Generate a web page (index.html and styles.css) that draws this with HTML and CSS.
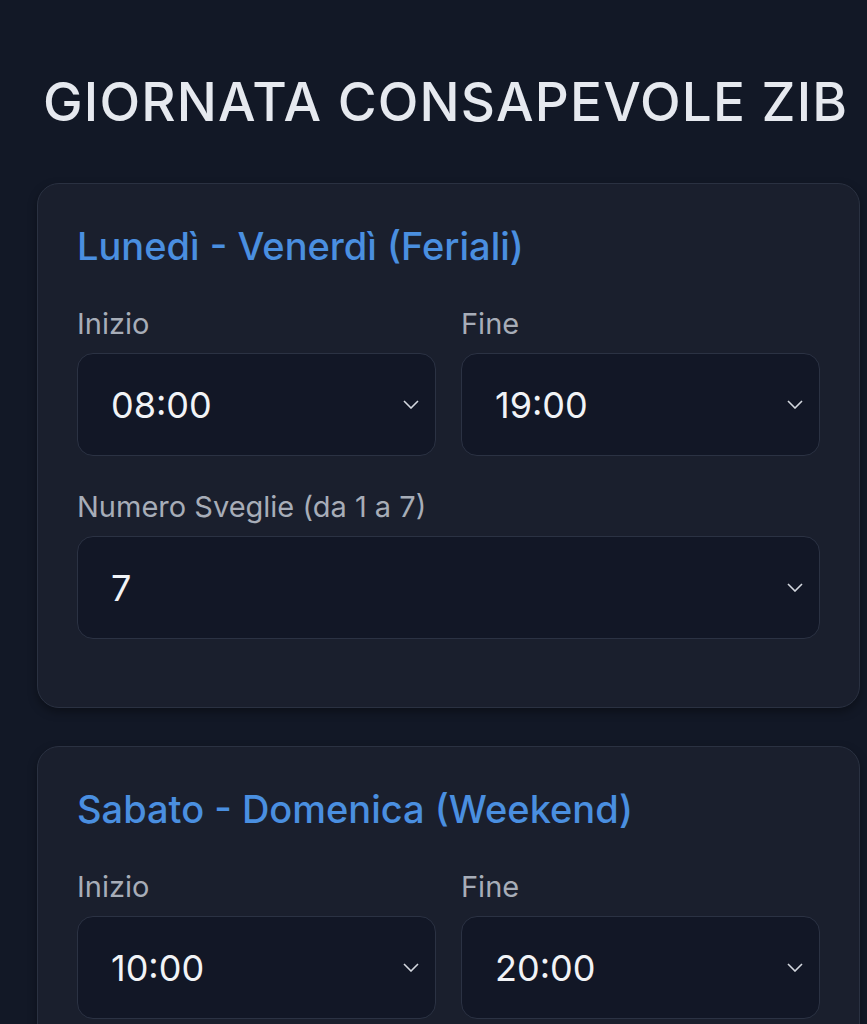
FILE: index.html
```html
<!DOCTYPE html>
<html lang="it">
<head>
    <meta charset="UTF-8">
    <meta name="viewport" content="width=device-width, initial-scale=1.0">
    <title>Giornata Consapevole ZIB</title>
    <link rel="stylesheet" href="styles.css">
</head>
<body>
    <div class="app">
        <h1 class="page-title">GIORNATA CONSAPEVOLE ZIB</h1>

        <div class="card">
            <h2 class="card-title">Lunedì - Venerdì (Feriali)</h2>
            <div class="row">
                <div class="form-group">
                    <label for="wdStart">Inizio</label>
                    <div class="select-wrap">
                        <select id="wdStart">
                            <option>08:00</option>
                        </select>
                        <svg class="chevron" viewBox="0 0 16 9"><path d="M1 1l7 7 7-7"/></svg>
                    </div>
                </div>
                <div class="form-group">
                    <label for="wdEnd">Fine</label>
                    <div class="select-wrap">
                        <select id="wdEnd">
                            <option>19:00</option>
                        </select>
                        <svg class="chevron" viewBox="0 0 16 9"><path d="M1 1l7 7 7-7"/></svg>
                    </div>
                </div>
            </div>
            <div class="form-group">
                <label for="wdAlarms">Numero Sveglie (da 1 a 7)</label>
                <div class="select-wrap">
                    <select id="wdAlarms">
                        <option>7</option>
                    </select>
                    <svg class="chevron" viewBox="0 0 16 9"><path d="M1 1l7 7 7-7"/></svg>
                </div>
            </div>
        </div>

        <div class="card">
            <h2 class="card-title">Sabato - Domenica (Weekend)</h2>
            <div class="row">
                <div class="form-group">
                    <label for="weStart">Inizio</label>
                    <div class="select-wrap">
                        <select id="weStart">
                            <option>10:00</option>
                        </select>
                        <svg class="chevron" viewBox="0 0 16 9"><path d="M1 1l7 7 7-7"/></svg>
                    </div>
                </div>
                <div class="form-group">
                    <label for="weEnd">Fine</label>
                    <div class="select-wrap">
                        <select id="weEnd">
                            <option>20:00</option>
                        </select>
                        <svg class="chevron" viewBox="0 0 16 9"><path d="M1 1l7 7 7-7"/></svg>
                    </div>
                </div>
            </div>
            <div class="form-group">
                <label for="weAlarms">Numero Sveglie (da 1 a 7)</label>
                <div class="select-wrap">
                    <select id="weAlarms">
                        <option>5</option>
                    </select>
                    <svg class="chevron" viewBox="0 0 16 9"><path d="M1 1l7 7 7-7"/></svg>
                </div>
            </div>
        </div>
    </div>
</body>
</html>
```

FILE: styles.css
```css
* {
    margin: 0;
    padding: 0;
    box-sizing: border-box;
    font-family: Inter, "Noto Sans", sans-serif;
}

body {
    background: #121826;
    color: #e5e7eb;
    overflow: hidden;
}

.app {
    padding: 74px 7px 0 37px;
}

.page-title {
    font-size: 53px;
    font-weight: 500;
    letter-spacing: 1.2px;
    color: #e6e9ef;
    line-height: 56px;
    margin-left: 6px;
    margin-bottom: 53px;
}

.card {
    background: #1a1f2d;
    border: 1px solid #2a3141;
    border-radius: 22px;
    box-shadow: 0 4px 10px rgba(0, 0, 0, 0.35);
    padding: 40px 39px 34px;
    margin-bottom: 38px;
}

.card-title {
    font-size: 38px;
    font-weight: 500;
    color: #4a8fe0;
    line-height: 44px;
    margin-bottom: 39px;
}

.row {
    display: grid;
    grid-template-columns: 1fr 1fr;
    gap: 25px;
}

.form-group {
    margin-bottom: 34px;
}

.form-group label {
    display: block;
    font-size: 29px;
    color: #a7adb8;
    line-height: 34px;
    margin-bottom: 12px;
}

.select-wrap {
    position: relative;
}

.select-wrap select {
    width: 100%;
    height: 103px;
    appearance: none;
    -webkit-appearance: none;
    background: #121726;
    border: 1px solid #2b3243;
    border-radius: 16px;
    color: #f1f3f6;
    font-size: 36px;
    padding: 0 33px;
    outline: none;
}

.chevron {
    position: absolute;
    right: 17px;
    top: 47px;
    width: 16px;
    height: 9px;
    fill: none;
    stroke: #d4d8df;
    stroke-width: 1.6;
    pointer-events: none;
}
```
